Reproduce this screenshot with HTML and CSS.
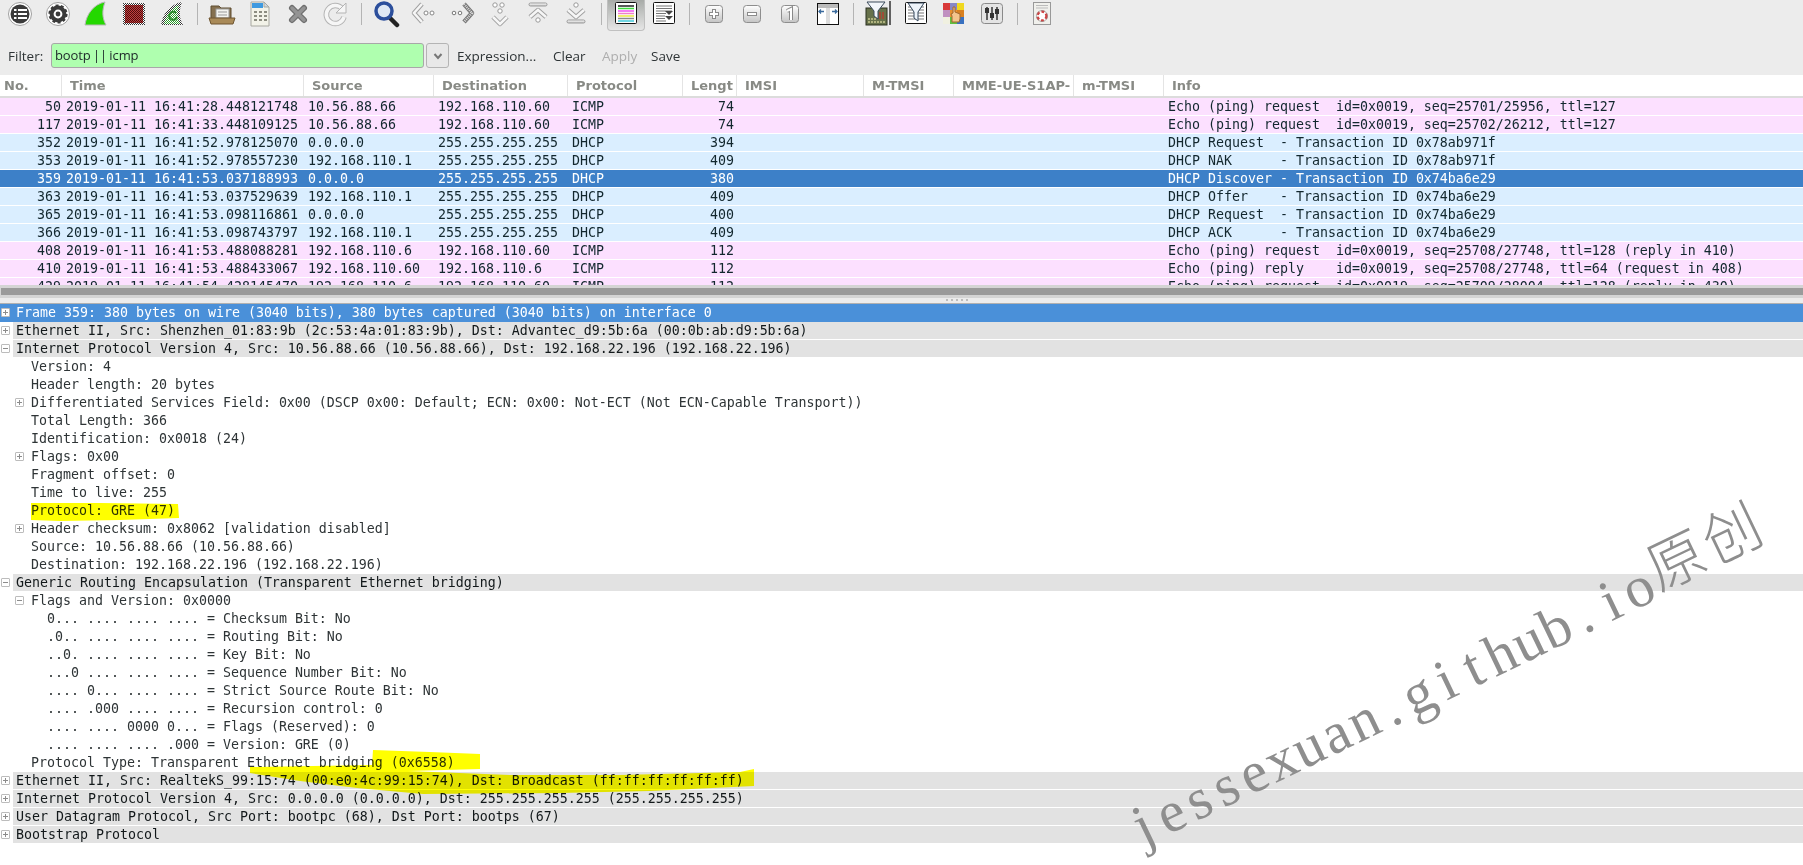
FILE: index.html
```html
<!DOCTYPE html>
<html lang="en">
<head>
<meta charset="utf-8">
<title>Wireshark</title>
<link rel="stylesheet" href="styles.css">
</head>
<body>
<svg class="defs" aria-hidden="true">
  <defs>
    <pattern id="dither" width="2" height="2" patternUnits="userSpaceOnUse"><rect width="2" height="2" fill="#fff"/><rect width="1" height="1" fill="#333"/><rect x="1" y="1" width="1" height="1" fill="#333"/></pattern>
    <pattern id="ditherRed" width="2" height="2" patternUnits="userSpaceOnUse"><rect width="2" height="2" fill="#c04040"/><rect width="1" height="1" fill="#500c0c"/><rect x="1" y="1" width="1" height="1" fill="#500c0c"/></pattern>
    <pattern id="ditherGreen" width="2" height="2" patternUnits="userSpaceOnUse"><rect width="2" height="2" fill="#fff"/><rect width="1" height="1" fill="#2c9c2c"/><rect x="1" y="1" width="1" height="1" fill="#2c9c2c"/></pattern>
    <linearGradient id="nav" x1="0" y1="0" x2="0" y2="1"><stop offset="0" stop-color="#fff"/><stop offset="1" stop-color="#c4c4c4"/></linearGradient>
  </defs>
</svg>
<div class="app">
  <div class="toolbar">
    <span class="tool"><svg viewBox="0 0 28 28"><circle cx="14" cy="14" r="11.5" fill="#fff" stroke="#a0a0a0"/><circle cx="14" cy="14" r="9.5" fill="#3a3a3a"/><g fill="#fff"><rect x="8" y="9" width="2.5" height="2"/><rect x="8" y="13" width="2.5" height="2"/><rect x="8" y="17" width="2.5" height="2"/><rect x="12" y="9" width="9" height="2"/><rect x="12" y="13" width="9" height="2"/><rect x="12" y="17" width="9" height="2"/></g></svg></span>
    <span class="tool"><svg viewBox="0 0 28 28"><circle cx="14" cy="14" r="11.5" fill="#fff" stroke="#a0a0a0"/><circle cx="14" cy="14" r="8.4" fill="#3a3a3a"/><circle cx="14" cy="14" r="8.6" fill="none" stroke="#3a3a3a" stroke-width="2" stroke-dasharray="3 2.4"/><circle cx="14" cy="14" r="4.4" fill="#fff"/><circle cx="14" cy="14" r="2.4" fill="#3a3a3a"/></svg></span>
    <span class="tool"><svg viewBox="0 0 28 28"><path d="M3 25C4.500 14 12 4 23 2C20 10 20 18 24 25Z" fill="#24d800" stroke="#b8b8b8"/></svg></span>
    <span class="tool"><svg viewBox="0 0 28 28"><rect x="3" y="3" width="22" height="22" fill="url(#dither)"/><rect x="5" y="5" width="18" height="18" fill="url(#ditherRed)"/></svg></span>
    <span class="tool"><svg viewBox="0 0 28 28"><path d="M3 25C4.500 14 12 4 24 2C21 10 21 18 25 25Z" fill="url(#dither)"/><path d="M6 24C8 15 13 8 21 5C19 11 19 18 22 24Z" fill="url(#ditherGreen)"/><path d="M18 13a4 4 0 1 0 1 4" fill="none" stroke="#2c8c2c" stroke-width="2"/></svg></span>
    <span class="sep"></span>
    <span class="tool"><svg viewBox="0 0 28 28"><path d="M3 6h8l2 2h10v14H3Z" fill="#85704f" stroke="#5e4c30"/><rect x="8" y="9" width="13" height="9" fill="#f4f4f0" stroke="#999"/><path d="M10 12h9M10 15h9" stroke="#999"/><path d="M1 18h26l-2 6H3Z" fill="#a98a58" stroke="#6e5530"/></svg></span>
    <span class="tool"><svg viewBox="0 0 28 28"><path d="M5 2h13l5 5v19H5Z" fill="#f2f2e8" stroke="#a8a8a0"/><path d="M6 3h11v5H6Z" fill="#3f9ae0"/><path d="M18 2v5h5Z" fill="#d0d8e0" stroke="#a8a8a0"/><path d="M8 12h3M13 12h3M18 12h3M8 16h3M13 16h3M18 16h3M8 20h3M13 20h3M18 20h3" stroke="#8c8c80" stroke-width="2"/></svg></span>
    <span class="tool"><svg viewBox="0 0 28 28"><path d="M8 8l12 12M20 8L8 20" stroke="#6e6e6e" stroke-width="6" stroke-linecap="round"/><path d="M8 8l12 12M20 8L8 20" stroke="#949494" stroke-width="3.500" stroke-linecap="round"/></svg></span>
    <span class="tool"><svg viewBox="0 0 28 28"><path d="M20 8.500A9 9 0 1 0 22 17" fill="none" stroke="#b4b4b4" stroke-width="5.500"/><path d="M20 8.500A9 9 0 1 0 22 17" fill="none" stroke="#f6f6f6" stroke-width="3.500"/><path d="M24 3v10H14Z" fill="#f6f6f6" stroke="#b4b4b4"/></svg></span>
    <span class="sep"></span>
    <span class="tool"><svg viewBox="0 0 28 28"><path d="M17 17l8 8" stroke="#222" stroke-width="4.500" stroke-linecap="round"/><circle cx="12" cy="11" r="8" fill="#dfe8f4" stroke="#2c4f9c" stroke-width="3.500"/></svg></span>
    <span class="tool"><svg viewBox="0 0 28 28"><path d="M12 4L4 13l8 9" fill="none" stroke="#a0a0a0" stroke-width="4.500" stroke-linejoin="round"/><path d="M12 4L4 13l8 9" fill="none" stroke="#f6f6f6" stroke-width="2.500"/><circle cx="16" cy="13" r="2" fill="#fff" stroke="#888"/><circle cx="22" cy="13" r="2" fill="#fff" stroke="#888"/></svg></span>
    <span class="tool"><svg viewBox="0 0 28 28"><path d="M16 4l8 9-8 9" fill="none" stroke="#777" stroke-width="4.500" stroke-linejoin="round"/><path d="M16 4l8 9-8 9" fill="none" stroke="#ddd" stroke-width="2.500" stroke-dasharray="1 1"/><circle cx="12" cy="13" r="1.800" fill="#fff" stroke="#777"/><circle cx="6" cy="13" r="1.800" fill="#fff" stroke="#777"/></svg></span>
    <span class="tool"><svg viewBox="0 0 28 28"><circle cx="9" cy="5" r="2.200" fill="#fff" stroke="#999"/><circle cx="16" cy="5" r="2.200" fill="#fff" stroke="#999"/><circle cx="14" cy="11" r="2.200" fill="#fff" stroke="#999"/><path d="M7 17l7 7 7-7" fill="none" stroke="#a0a0a0" stroke-width="4.500" stroke-linejoin="round"/><path d="M7 17l7 7 7-7" fill="none" stroke="#f6f6f6" stroke-width="2.500"/></svg></span>
    <span class="tool"><svg viewBox="0 0 28 28"><rect x="5" y="3" width="18" height="3" rx="1.500" fill="url(#nav)" stroke="#999"/><path d="M6 17l8-7 8 7" fill="none" stroke="#a0a0a0" stroke-width="4.500" stroke-linejoin="round"/><path d="M6 17l8-7 8 7" fill="none" stroke="#f6f6f6" stroke-width="2.500"/><circle cx="14" cy="20" r="2.200" fill="#fff" stroke="#999"/></svg></span>
    <span class="tool"><svg viewBox="0 0 28 28"><circle cx="14" cy="5" r="2.200" fill="#fff" stroke="#999"/><path d="M6 10l8 7 8-7" fill="none" stroke="#a0a0a0" stroke-width="4.500" stroke-linejoin="round"/><path d="M6 10l8 7 8-7" fill="none" stroke="#f6f6f6" stroke-width="2.500"/><rect x="5" y="20" width="18" height="3" rx="1.500" fill="url(#nav)" stroke="#999"/></svg></span>
    <span class="sep"></span>
    <span class="tool active"><svg viewBox="0 0 28 28"><rect x="3.500" y="2.500" width="21" height="21" rx="1" fill="#fff" stroke="#111"/><path d="M6 6h16" stroke="#222" stroke-width="1.500"/><path d="M6 8.500h16" stroke="#3ddc3d" stroke-width="1.500"/><path d="M6 11h16" stroke="#f050f0" stroke-width="1.500"/><path d="M6 13.500h16" stroke="#f080c8" stroke-width="1.500"/><path d="M6 16h16" stroke="#e8e840" stroke-width="1.500"/><path d="M6 18.500h16" stroke="#8a8a8a" stroke-width="1.500"/><path d="M6 21h16" stroke="#40c8d8" stroke-width="1.500"/></svg></span>
    <span class="tool"><svg viewBox="0 0 28 28"><rect x="3.500" y="2.500" width="21" height="21" rx="1" fill="#fff" stroke="#111"/><path d="M6 6h16M6 8.500h16M6 11h16M6 13.500h10M6 16h9M6 18.500h9M6 21h10" stroke="#777" stroke-width="1.200"/><path d="M15 11h8l-4 4ZM15 16h8l-4 4Z" fill="#444"/></svg></span>
    <span class="sep"></span>
    <span class="tool"><svg viewBox="0 0 28 28"><rect x="5.500" y="5.500" width="17" height="17" rx="3" fill="url(#nav)" stroke="#8e8e8e"/><path d="M14 9v10M9 14h10" stroke="#8a8a8a" stroke-width="4"/><path d="M14 10v8M10 14h8" stroke="#fff" stroke-width="2"/></svg></span>
    <span class="tool"><svg viewBox="0 0 28 28"><rect x="5.500" y="5.500" width="17" height="17" rx="3" fill="url(#nav)" stroke="#8e8e8e"/><path d="M9 14h10" stroke="#8a8a8a" stroke-width="4"/><path d="M10 14h8" stroke="#fff" stroke-width="2"/></svg></span>
    <span class="tool"><svg viewBox="0 0 28 28"><rect x="5.500" y="5.500" width="17" height="17" rx="3" fill="url(#nav)" stroke="#8e8e8e"/><path d="M11 11l4-2v11" fill="none" stroke="#8a8a8a" stroke-width="4"/><path d="M11 11l4-2v11" fill="none" stroke="#fff" stroke-width="2"/></svg></span>
    <span class="tool"><svg viewBox="0 0 28 28"><rect x="3.500" y="3.500" width="21" height="21" fill="#fff" stroke="#111"/><rect x="4" y="4" width="20" height="4" fill="#bbb"/><rect x="12" y="8" width="4" height="16" fill="#ddd"/><path d="M5 11.500h5M7 9.500l-2 2 2 2M18 11.500h5M21 9.500l2 2-2 2" fill="none" stroke="#3a6a9c" stroke-width="1.300"/></svg></span>
    <span class="sep"></span>
    <span class="tool"><svg viewBox="0 0 28 28"><rect x="2" y="8" width="21" height="17" fill="#66714a" stroke="#2a3020"/><path d="M4 22h17M4 19h8" stroke="#c8c890" stroke-width="1.500" stroke-dasharray="2 1"/><path d="M16 12v7M19 12v7" stroke="#b04030" stroke-width="1.500"/><path d="M26 1v24" stroke="#333" stroke-width="1.500"/><path d="M3 2h18l-7 9v8l-4-3v-5Z" fill="#f2f6fa" stroke="#3a4a5a"/></svg></span>
    <span class="tool"><svg viewBox="0 0 28 28"><rect x="3.500" y="2.500" width="21" height="21" rx="1" fill="#fff" stroke="#111"/><path d="M6 7h16M6 10h16M6 13h16M6 16h16M6 19h16" stroke="#777"/><path d="M6 3h16l-6 9v9l-4-3v-6Z" fill="#eef4fa" stroke="#34465a"/></svg></span>
    <span class="tool"><svg viewBox="0 0 28 28"><rect x="3" y="3" width="7" height="7" fill="#d83838"/><rect x="10" y="3" width="7" height="7" fill="#8888c8"/><rect x="17" y="3" width="7" height="7" fill="#f0d820"/><rect x="3" y="10" width="7" height="7" fill="#c090c0"/><rect x="10" y="10" width="7" height="7" fill="#e89030"/><rect x="17" y="10" width="7" height="7" fill="#d88020"/><rect x="3" y="17" width="7" height="7" fill="#f0f0e0"/><rect x="10" y="17" width="7" height="7" fill="#60c040"/><rect x="17" y="17" width="7" height="7" fill="#3870c0"/><path d="M12 22v-6l-1-2 2-1V7h2v5l5 2v5l-1 3Z" fill="#f4c48c" stroke="#a06830"/></svg></span>
    <span class="tool"><svg viewBox="0 0 28 28"><rect x="3.500" y="3.500" width="21" height="20" rx="3" fill="#e4e4e4" stroke="#8a8a8a"/><path d="M9 7v13M14 7v13M19 7v13" stroke="#333" stroke-width="1.500"/><rect x="7" y="8" width="4" height="5" fill="#333"/><rect x="12" y="13" width="4" height="5" fill="#333"/><rect x="17" y="9" width="4" height="5" fill="#333"/></svg></span>
    <span class="sep"></span>
    <span class="tool"><svg viewBox="0 0 28 28"><rect x="5.500" y="2.500" width="17" height="22" fill="#f0f0ec" stroke="#999"/><path d="M8 5.500h12M8 8h12" stroke="#bbb"/><circle cx="14" cy="16" r="4.500" fill="#fff" stroke="#d04040" stroke-width="2.500" stroke-dasharray="3 2"/><circle cx="14" cy="16" r="5.500" fill="none" stroke="#888" stroke-width=".6"/></svg></span>
  </div>

  <div class="filterbar">
    <span class="flabel">Filter:</span>
    <span class="finput">bootp || icmp</span>
    <span class="fdrop"><svg viewBox="0 0 10 10"><path d="M1.500 3l3.500 4 3.500-4" fill="none" stroke="#777" stroke-width="2"/></svg></span>
    <span class="fbtn fexpr">Expression...</span>
    <span class="fbtn fclear">Clear</span>
    <span class="fbtn fapply">Apply</span>
    <span class="fbtn">Save</span>
  </div>

  <div class="grid head">
    <span class="hc">No.</span><span class="hc">Time</span><span class="hc">Source</span><span class="hc">Destination</span><span class="hc">Protocol</span><span class="hc">Lengt</span><span class="hc">IMSI</span><span class="hc">M-TMSI</span><span class="hc">MME-UE-S1AP-</span><span class="hc">m-TMSI</span><span class="hc last">Info</span>
  </div>

  <div class="list">
    <div class="grid row icmp"><span class="num">50</span><span>2019-01-11 16:41:28.448121748</span><span>10.56.88.66</span><span>192.168.110.60</span><span>ICMP</span><span class="len">74</span><span></span><span></span><span></span><span></span><span>Echo (ping) request  id=0x0019, seq=25701/25956, ttl=127</span></div>
    <div class="grid row icmp"><span class="num">117</span><span>2019-01-11 16:41:33.448109125</span><span>10.56.88.66</span><span>192.168.110.60</span><span>ICMP</span><span class="len">74</span><span></span><span></span><span></span><span></span><span>Echo (ping) request  id=0x0019, seq=25702/26212, ttl=127</span></div>
    <div class="grid row dhcp"><span class="num">352</span><span>2019-01-11 16:41:52.978125070</span><span>0.0.0.0</span><span>255.255.255.255</span><span>DHCP</span><span class="len">394</span><span></span><span></span><span></span><span></span><span>DHCP Request  - Transaction ID 0x78ab971f</span></div>
    <div class="grid row dhcp"><span class="num">353</span><span>2019-01-11 16:41:52.978557230</span><span>192.168.110.1</span><span>255.255.255.255</span><span>DHCP</span><span class="len">409</span><span></span><span></span><span></span><span></span><span>DHCP NAK      - Transaction ID 0x78ab971f</span></div>
    <div class="grid row selected"><span class="num">359</span><span>2019-01-11 16:41:53.037188993</span><span>0.0.0.0</span><span>255.255.255.255</span><span>DHCP</span><span class="len">380</span><span></span><span></span><span></span><span></span><span>DHCP Discover - Transaction ID 0x74ba6e29</span></div>
    <div class="grid row dhcp"><span class="num">363</span><span>2019-01-11 16:41:53.037529639</span><span>192.168.110.1</span><span>255.255.255.255</span><span>DHCP</span><span class="len">409</span><span></span><span></span><span></span><span></span><span>DHCP Offer    - Transaction ID 0x74ba6e29</span></div>
    <div class="grid row dhcp"><span class="num">365</span><span>2019-01-11 16:41:53.098116861</span><span>0.0.0.0</span><span>255.255.255.255</span><span>DHCP</span><span class="len">400</span><span></span><span></span><span></span><span></span><span>DHCP Request  - Transaction ID 0x74ba6e29</span></div>
    <div class="grid row dhcp"><span class="num">366</span><span>2019-01-11 16:41:53.098743797</span><span>192.168.110.1</span><span>255.255.255.255</span><span>DHCP</span><span class="len">409</span><span></span><span></span><span></span><span></span><span>DHCP ACK      - Transaction ID 0x74ba6e29</span></div>
    <div class="grid row icmp"><span class="num">408</span><span>2019-01-11 16:41:53.488088281</span><span>192.168.110.6</span><span>192.168.110.60</span><span>ICMP</span><span class="len">112</span><span></span><span></span><span></span><span></span><span>Echo (ping) request  id=0x0019, seq=25708/27748, ttl=128 (reply in 410)</span></div>
    <div class="grid row icmp"><span class="num">410</span><span>2019-01-11 16:41:53.488433067</span><span>192.168.110.60</span><span>192.168.110.6</span><span>ICMP</span><span class="len">112</span><span></span><span></span><span></span><span></span><span>Echo (ping) reply    id=0x0019, seq=25708/27748, ttl=64 (request in 408)</span></div>
    <div class="grid row icmp"><span class="num">429</span><span>2019-01-11 16:41:54.428145470</span><span>192.168.110.6</span><span>192.168.110.60</span><span>ICMP</span><span class="len">112</span><span></span><span></span><span></span><span></span><span>Echo (ping) request  id=0x0019, seq=25709/28004, ttl=128 (reply in 430)</span></div>
  </div>

  <div class="hscroll"><div class="thumb"></div></div>
  <div class="handle"><i></i><i></i><i></i><i></i><i></i></div>

  <div class="tree">
    <div class="node top sel"><span class="exp plus"></span><span class="label">Frame 359: 380 bytes on wire (3040 bits), 380 bytes captured (3040 bits) on interface 0</span></div>
    <div class="node top"><span class="exp plus"></span><span class="label">Ethernet II, Src: Shenzhen_01:83:9b (2c:53:4a:01:83:9b), Dst: Advantec_d9:5b:6a (00:0b:ab:d9:5b:6a)</span></div>
    <div class="node top"><span class="exp minus"></span><span class="label">Internet Protocol Version 4, Src: 10.56.88.66 (10.56.88.66), Dst: 192.168.22.196 (192.168.22.196)</span></div>
    <div class="node d1">Version: 4</div>
    <div class="node d1">Header length: 20 bytes</div>
    <div class="node d1x"><span class="exp plus"></span>Differentiated Services Field: 0x00 (DSCP 0x00: Default; ECN: 0x00: Not-ECT (Not ECN-Capable Transport))</div>
    <div class="node d1">Total Length: 366</div>
    <div class="node d1">Identification: 0x0018 (24)</div>
    <div class="node d1x"><span class="exp plus"></span>Flags: 0x00</div>
    <div class="node d1">Fragment offset: 0</div>
    <div class="node d1">Time to live: 255</div>
    <div class="node d1">Protocol: GRE (47)</div>
    <div class="node d1x"><span class="exp plus"></span>Header checksum: 0x8062 [validation disabled]</div>
    <div class="node d1">Source: 10.56.88.66 (10.56.88.66)</div>
    <div class="node d1">Destination: 192.168.22.196 (192.168.22.196)</div>
    <div class="node top"><span class="exp minus"></span><span class="label">Generic Routing Encapsulation (Transparent Ethernet bridging)</span></div>
    <div class="node d1x"><span class="exp minus"></span>Flags and Version: 0x0000</div>
    <div class="node d2">0... .... .... .... = Checksum Bit: No</div>
    <div class="node d2">.0.. .... .... .... = Routing Bit: No</div>
    <div class="node d2">..0. .... .... .... = Key Bit: No</div>
    <div class="node d2">...0 .... .... .... = Sequence Number Bit: No</div>
    <div class="node d2">.... 0... .... .... = Strict Source Route Bit: No</div>
    <div class="node d2">.... .000 .... .... = Recursion control: 0</div>
    <div class="node d2">.... .... 0000 0... = Flags (Reserved): 0</div>
    <div class="node d2">.... .... .... .000 = Version: GRE (0)</div>
    <div class="node d1">Protocol Type: Transparent Ethernet bridging (0x6558)</div>
    <div class="node top"><span class="exp plus"></span><span class="label">Ethernet II, Src: RealtekS_99:15:74 (00:e0:4c:99:15:74), Dst: Broadcast (ff:ff:ff:ff:ff:ff)</span></div>
    <div class="node top"><span class="exp plus"></span><span class="label">Internet Protocol Version 4, Src: 0.0.0.0 (0.0.0.0), Dst: 255.255.255.255 (255.255.255.255)</span></div>
    <div class="node top"><span class="exp plus"></span><span class="label">User Datagram Protocol, Src Port: bootpc (68), Dst Port: bootps (67)</span></div>
    <div class="node top"><span class="exp plus"></span><span class="label">Bootstrap Protocol</span></div>
  </div>
</div>

<svg class="marker" viewBox="0 0 1803 865" aria-hidden="true">
  <path d="M31 503L100 503L178 504L179 518L120 520L60 521L31 520Z"/>
  <path d="M250 767L372 765L373 750L430 752L480 754L480 769L408 771L510 775L620 775L740 772L754 769L754 786L650 791L560 793L423 794L357 788L300 781L250 773Z"/>
</svg>

<div class="watermark"><span>j</span><span>e</span><span>s</span><span>s</span><span>e</span><span>x</span><span>u</span><span>a</span><span>n</span><span>.</span><span>g</span><span>i</span><span>t</span><span>h</span><span>u</span><span>b</span><span>.</span><span>i</span><span>o</span><span class="cjk">原</span><span class="cjk">创</span></div>
</body>
</html>
```
FILE: styles.css
```css
* { box-sizing: border-box; }
html, body { margin: 0; padding: 0; }
body {
  width: 1803px;
  height: 865px;
  overflow: hidden;
  position: relative;
  background: #fff;
  font-family: "DejaVu Sans Mono", monospace;
  font-size: 13.29px;
  color: #2e3436;
}
.defs { position: absolute; width: 0; height: 0; }
.app { display: flex; flex-direction: column; height: 865px; }

/* toolbar */
.toolbar {
  display: flex;
  align-items: flex-start;
  height: 40px;
  padding-left: 1px;
  background: #ececec;
}
.tool {
  display: flex;
  justify-content: center;
  width: 38px;
  height: 31px;
}
.tool svg { width: 28px; height: 28px; }
.tool.active {
  border: 1px solid #c0c0c0;
  border-top: 0;
  border-radius: 0 0 4px 4px;
  background: linear-gradient(#a8aba8, #e6e6e6);
}
.sep {
  width: 12px;
  height: 22px;
  margin-top: 3px;
  display: flex;
  justify-content: center;
}
.sep::after { content: ""; width: 1px; background: #b4b4b4; margin-left: 1px; }

/* filter bar */
.filterbar {
  display: flex;
  align-items: center;
  height: 35px;
  padding: 3px 0 7px 8px;
  background: #ececec;
  font-family: "Open Sans", sans-serif;
  font-size: 13.5px;
}
.flabel { width: 43px; }
.finput {
  width: 373px;
  height: 25px;
  line-height: 23px;
  padding-left: 3px;
  background: #afffaf;
  border: 1px solid #a8a8a8;
  border-radius: 3px;
  color: #1c2628;
  font-size: 13px;
  word-spacing: -1px;
  letter-spacing: -0.1px;
}
.fdrop {
  width: 23px;
  height: 25px;
  margin-left: 2px;
  display: flex;
  align-items: center;
  justify-content: center;
  background: #e8e8e8;
  border: 1px solid #b4b4b4;
  border-radius: 3px;
}
.fdrop svg { width: 10px; height: 10px; }
.fexpr { margin-left: 8px; width: 96px; }
.fclear { width: 49px; }
.fapply { width: 49px; color: #aeaeae; }

/* packet list */
.grid {
  display: grid;
  grid-template-columns: 62px 242px 130px 134px 115px 54px 127px 90px 120px 90px 1fr;
}
.head {
  height: 23px;
  background: #fff;
  border-bottom: 2px solid #dcdcdc;
  font-family: "DejaVu Sans", sans-serif;
  font-weight: bold;
  font-size: 13px;
  color: #888a85;
}
.hc {
  line-height: 22px;
  padding-left: 8px;
  border-right: 1px solid #e4e4e4;
  overflow: hidden;
  white-space: nowrap;
}
.hc:first-child { padding-left: 4px; }
.hc.last { border-right: 0; }
.list { height: 187px; overflow: hidden; background: #fff; }
.row {
  height: 18px;
  line-height: 17px;
  border-bottom: 1px solid #fff;
  white-space: pre;
  color: #12272e;
}
.row > span { padding-left: 4px; overflow: hidden; }
.row > .num { text-align: right; padding: 0 1px 0 0; }
.row > .len { text-align: right; padding: 0 3px 0 0; }
.row > span:last-child { overflow: visible; }
.icmp { background: #fce0ff; }
.dhcp { background: #daeeff; }
.selected { background: #3d80c8; color: #fff; }

/* splitter */
.hscroll { height: 13px; padding: 3px 0; background: #d4d4d4; }
.thumb { height: 7px; background: #9a9a9a; margin-left: 1px; }
.handle {
  display: flex;
  justify-content: center;
  align-items: center;
  gap: 3px;
  height: 6px;
  padding: 0 0 1px 111px;
  background: #ececec;
  border-bottom: 1px solid #b0b0b0;
}
.handle i { width: 2px; height: 2px; background: #bcbcbc; }

/* details tree */
.tree { flex: 1; background: #fff; }
.node {
  display: flex;
  align-items: flex-start;
  height: 18px;
  line-height: 17px;
  white-space: pre;
}
.exp {
  position: relative;
  flex: none;
  width: 9px;
  height: 9px;
  margin-top: 4px;
  background: #fff;
  border: 1px solid #bcbcbc;
  border-radius: 1px;
}
.exp::before {
  content: "";
  position: absolute;
  left: 1px;
  top: 3px;
  width: 5px;
  height: 1px;
  background: #8c8c8c;
}
.plus::after {
  content: "";
  position: absolute;
  left: 3px;
  top: 1px;
  width: 1px;
  height: 5px;
  background: #8c8c8c;
}
.top { padding-left: 1px; }
.top .exp { margin-right: 3px; }
.label {
  flex: 1;
  height: 17px;
  padding-left: 3px;
  background: #e2e2e2;
  color: #12181a;
}
.sel { background: #4a90d9; }
.sel .label { background: #4a90d9; color: #fff; }
.d1 { padding-left: 31px; }
.d1x { padding-left: 15px; }
.d1x .exp { margin-right: 7px; }
.d2 { padding-left: 47px; }

/* overlays */
.marker {
  position: absolute;
  left: 0;
  top: 0;
  width: 1803px;
  height: 865px;
  fill: #ffff00;
  mix-blend-mode: multiply;
  pointer-events: none;
}
.watermark {
  position: absolute;
  left: 1135px;
  top: 790px;
  display: flex;
  align-items: baseline;
  height: 70px;
  font-family: "Liberation Serif", "Noto Sans CJK SC", serif;
  font-size: 58px;
  line-height: 70px;
  color: #8e8e8e;
  transform: rotate(-25.7deg);
  transform-origin: 0 54px;
  pointer-events: none;
}
.watermark span { width: 30.5px; text-align: center; flex: none; }
.watermark .cjk {
  width: 62px;
  font-size: 58px;
  font-family: "Noto Sans CJK SC", sans-serif;
  font-weight: 300;
  transform: translateY(-6px);
}
```
